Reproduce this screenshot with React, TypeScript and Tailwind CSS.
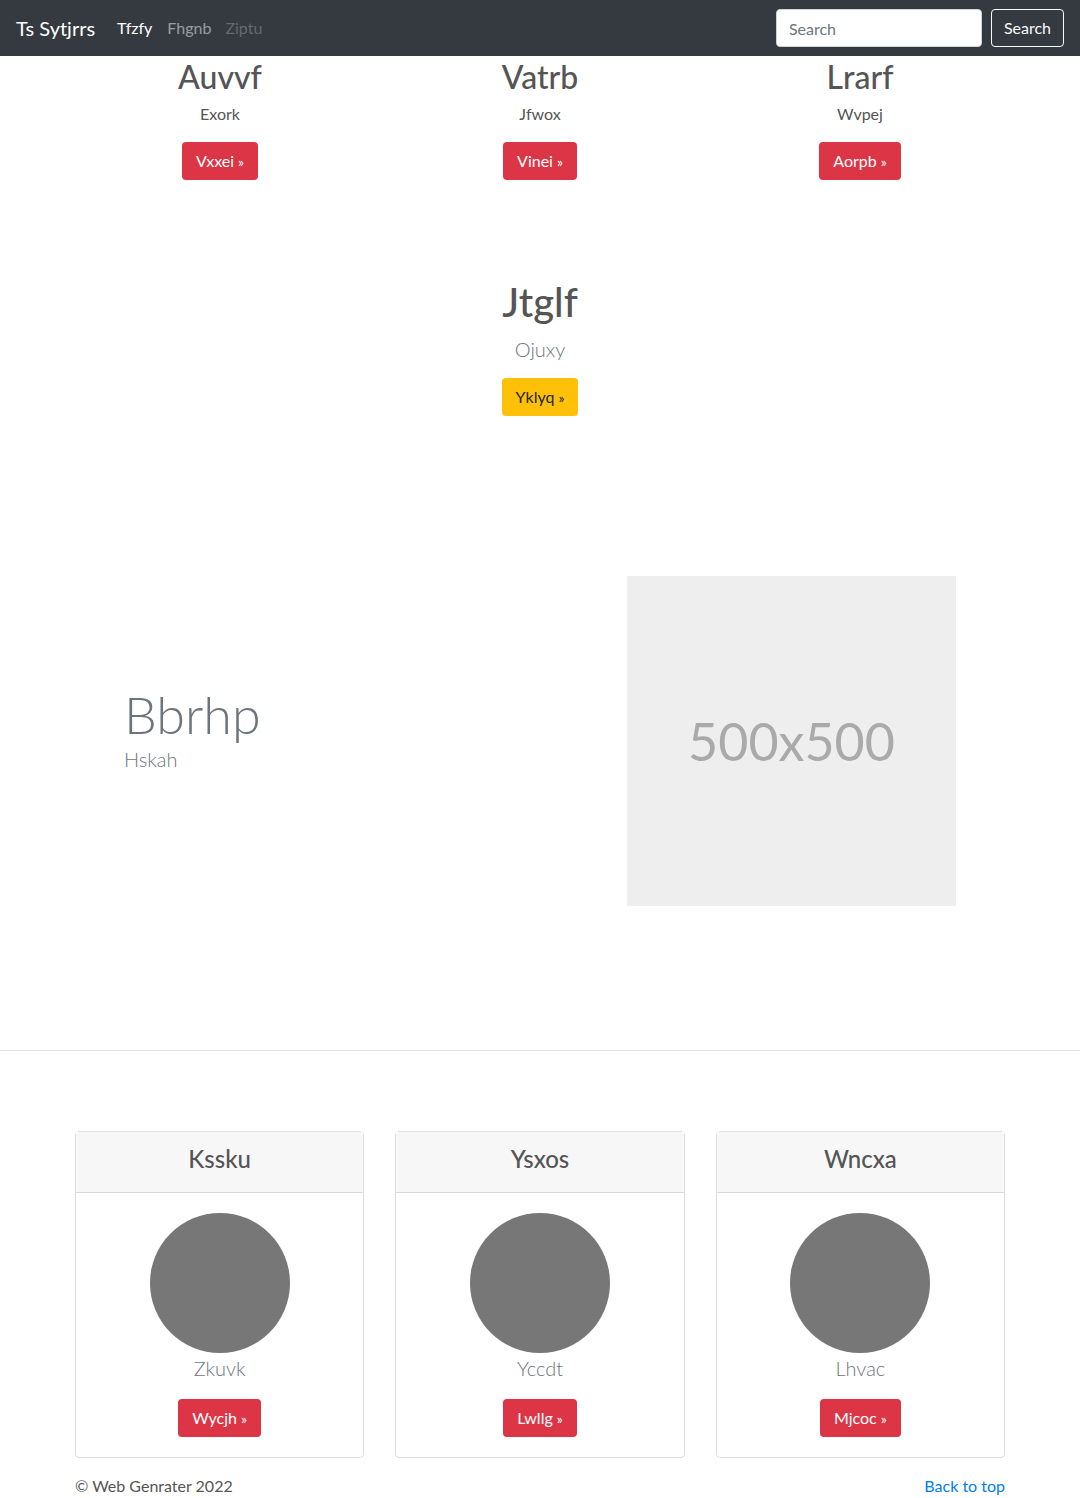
const font = { fontFamily: '"Segoe UI", Lato, "Liberation Sans", sans-serif' };

function RedButton({ label }: { label: string }) {
  return (
    <a className="inline-flex h-[38px] items-center rounded-[4px] bg-[#dc3545] px-[14px] text-[16px] text-white">
      {label}
      <span className="ml-[4px] text-[14px]">»</span>
    </a>
  );
}

function Navbar() {
  return (
    <nav className="flex h-[56px] items-center bg-[#343a40] px-[16px]">
      <span className="mr-[14px] text-[20px] text-white">Ts Sytjrrs</span>
      <ul className="flex text-[16px]">
        <li className="px-[8px] text-white">Tfzfy</li>
        <li className="px-[7px] text-white/50">Fhgnb</li>
        <li className="px-[7px] text-white/25">Ziptu</li>
      </ul>
      <div className="ml-auto flex items-center">
        <input
          placeholder="Search"
          className="h-[38px] w-[206px] rounded-[4px] border border-[#ced4da] bg-white px-[12px] text-[16px] text-[#495057] placeholder:text-[#6c757d]"
        />
        <button className="ml-[9px] h-[38px] rounded-[4px] border border-[#f8f9fa] px-[12px] text-[16px] text-[#f8f9fa]">
          Search
        </button>
      </div>
    </nav>
  );
}

const cols = [
  { title: "Auvvf", text: "Exork", btn: "Vxxei" },
  { title: "Vatrb", text: "Jfwox", btn: "Vinei" },
  { title: "Lrarf", text: "Wvpej", btn: "Aorpb" },
];

const cards = [
  { title: "Kssku", text: "Zkuvk", btn: "Wycjh" },
  { title: "Ysxos", text: "Yccdt", btn: "Lwllg" },
  { title: "Wncxa", text: "Lhvac", btn: "Mjcoc" },
];

export default function App() {
  return (
    <div className="min-h-[1498px] bg-white text-[#555]" style={font}>
      <Navbar />

      {/* top three columns */}
      <div className="mx-auto grid w-[960px] grid-cols-3 text-center">
        {cols.map((c) => (
          <div key={c.title} className="flex flex-col items-center">
            <h2 className="mb-[6px] pt-[2px] text-[32px] font-medium leading-[38px] text-[#555]">{c.title}</h2>
            <p className="mb-[16px] text-[16px] leading-[24px]">{c.text}</p>
            <RedButton label={c.btn} />
          </div>
        ))}
      </div>

      {/* center block */}
      <div className="mt-[98px] flex flex-col items-center text-center">
        <h1 className="mb-[8px] text-[40px] font-medium leading-[48px] text-[#555]">Jtglf</h1>
        <p className="mb-[14px] text-[20px] font-light leading-[30px] text-[#6c757d]">Ojuxy</p>
        <a className="inline-flex h-[38px] items-center rounded-[4px] bg-[#ffc107] px-[14px] text-[16px] text-[#212529]">
          Yklyq<span className="ml-[4px] text-[14px]">»</span>
        </a>
      </div>

      {/* featurette */}
      <div className="mx-auto mt-[160px] flex w-[960px] items-center justify-between px-[64px]">
        <div className="pb-[24px]">
          <h2 className="text-[52px] font-light leading-[60px] text-[#6c757d]">Bbrhp</h2>
          <p className="text-[20px] font-light leading-[30px] text-[#6c757d]">Hskah</p>
        </div>
        <div className="flex h-[330px] w-[329px] items-center justify-center bg-[#eeeeee] text-[52px] text-[#aaaaaa]">
          500x500
        </div>
      </div>

      <hr className="mt-[144px] border-t border-[#e5e5e5]" />

      {/* cards */}
      <div className="mx-auto mt-[80px] grid w-[930px] grid-cols-3 gap-[31px] text-center">
        {cards.map((c) => (
          <div key={c.title} className="flex flex-col rounded-[4px] border border-black/[0.125]">
            <div className="border-b border-black/[0.125] bg-[#f7f7f7] px-[20px] pt-[12px] pb-[11px]">
              <h4 className="mb-[8px] text-[24px] font-medium leading-[29px] text-[#555]">{c.title}</h4>
            </div>
            <div className="flex flex-col items-center p-[20px]">
              <div className="h-[140px] w-[140px] rounded-full bg-[#777]" />
              <p className="mb-[16px] text-[20px] font-light leading-[30px] text-[#6c757d]">{c.text}</p>
              <RedButton label={c.btn} />
            </div>
          </div>
        ))}
      </div>

      {/* footer */}
      <footer className="mx-auto mt-[16px] flex w-[930px] justify-between pb-[12px] text-[16px] leading-[24px]">
        <p className="text-[#555]">© Web Genrater 2022</p>
        <a className="text-[#007bff]">Back to top</a>
      </footer>
    </div>
  );
}
